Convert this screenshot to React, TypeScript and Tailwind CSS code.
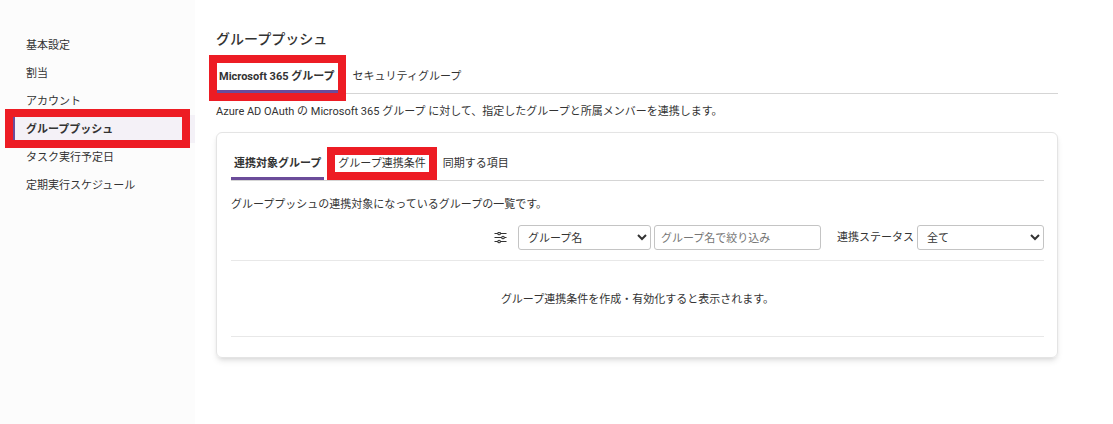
import React, { useState } from 'react'
import clsx from 'clsx'

const menuItems = [
    { name: '基本設定', href: '#basic' },
    { name: '割当', href: '#assign' },
    { name: 'アカウント', href: '#account' },
    { name: 'グループプッシュ', href: '#group-push' },
    { name: 'タスク実行予定日', href: '#task' },
    { name: '定期実行スケジュール', href: '#schedule' },
]

const groupTabs = ['Microsoft 365 グループ', 'セキュリティグループ']
const detailTabs = ['連携対象グループ', 'グループ連携条件', '同期する項目']

function Marker({ className }: { className: string }) {
    return <span aria-hidden="true" className={clsx('pointer-events-none absolute z-10 border-8 border-[#ed1c24]', className)} />
}

function SlidersIcon() {
    return (
        <svg viewBox="0 0 13 12" className="h-3 w-[13px]" fill="none" stroke="#333" strokeWidth="1.1" aria-hidden="true">
            <path d="M0.5 1.5h3.3M6.4 1.5H12.5M0.5 5.5h7.1M10.4 5.5H12.5M0.5 9.5h3.3M6.4 9.5H12.5" />
            <circle cx="5.1" cy="1.5" r="1.3" />
            <circle cx="9" cy="5.5" r="1.3" />
            <circle cx="5.1" cy="9.5" r="1.3" />
        </svg>
    )
}

function Sidebar() {
    return (
        <aside className="w-[195px] shrink-0 bg-[#fcfcfc] pt-[31px] pl-[13px]">
            <nav>
                {menuItems.map((item) => {
                    const isActive = item.name === 'グループプッシュ'
                    return (
                        <a
                            key={item.href}
                            href={item.href}
                            className={clsx(
                                'relative flex h-7 items-center border-l-2 pt-0.5 pl-[11px]',
                                isActive ? 'border-[#6b4c9a] bg-[#f4f1f7] font-bold' : 'border-transparent'
                            )}
                        >
                            {item.name}
                            {isActive && <Marker className="-top-1.5 -left-2.5 right-[5px] -bottom-[5px]" />}
                        </a>
                    )
                })}
            </nav>
        </aside>
    )
}

type TabsProps = {
    items: string[]
    marked: string
    markerClass: string
    className: string
}

function Tabs({ items, marked, markerClass, className }: TabsProps) {
    const [active, setActive] = useState(items[0])

    return (
        <div role="tablist" className={clsx('flex h-[34px] border-b border-[#d5d5d5]', className)}>
            {items.map((item) => (
                <button
                    key={item}
                    type="button"
                    role="tab"
                    aria-selected={item === active}
                    onClick={() => setActive(item)}
                    className={clsx(
                        'relative border-b-3 px-[3px] pt-1 whitespace-nowrap',
                        item === active ? 'border-[#6b4c9a] font-bold' : 'border-transparent'
                    )}
                >
                    {item}
                    {item === marked && <Marker className={markerClass} />}
                </button>
            ))}
        </div>
    )
}

export default function App() {
    return (
        <div className="flex min-h-screen bg-white font-['Roboto','Noto_Sans_CJK_JP',sans-serif] text-[11px] leading-4 text-[#333]">
            <Sidebar />

            <main className="min-w-0 flex-1 pt-[29px] pr-[55px] pl-[21px]">
                <h1 className="text-sm leading-5 font-medium">グループプッシュ</h1>

                <Tabs
                    items={groupTabs}
                    marked="Microsoft 365 グループ"
                    markerClass="-top-[5px] -right-2 -left-[7px] -bottom-[11px]"
                    className="mt-[11px] gap-3"
                />
                <p className="mt-2.5">
                    Azure AD OAuth の Microsoft 365 グループ に対して、指定したグループと所属メンバーを連携します。
                </p>

                <section className="mt-3 rounded-md border border-[#e4e4e4] pt-[14px] pr-[13px] pb-5 pl-3.5 shadow-md">
                    <Tabs
                        items={detailTabs}
                        marked="グループ連携条件"
                        markerClass="top-0 -right-2 -left-2 -bottom-[3px]"
                        className="gap-[11px]"
                    />
                    <p className="mt-4">グループプッシュの連携対象になっているグループの一覧です。</p>

                    <div className="mt-3 flex items-center justify-end gap-[3px]">
                        <button type="button" aria-label="絞り込み" className="mr-2">
                            <SlidersIcon />
                        </button>
                        <select aria-label="検索項目" className="h-[25px] w-[133px] rounded-[3px] border border-[#c4c4c4] bg-white px-[5px] pt-px">
                            <option>グループ名</option>
                        </select>
                        <input
                            type="text"
                            aria-label="グループ名"
                            placeholder="グループ名で絞り込み"
                            className="h-[25px] w-[167px] rounded-[3px] border border-[#c4c4c4] px-1.5 pt-px placeholder:text-[#757575]"
                        />
                        <label htmlFor="status" className="ml-[13px]">連携ステータス</label>
                        <select id="status" className="h-[25px] w-[127px] rounded-[3px] border border-[#c4c4c4] bg-white px-[5px] pt-px">
                            <option>全て</option>
                        </select>
                    </div>

                    <div className="mt-2.5 border-y border-[#e8e8e8] pt-[31px] pb-7 text-center">
                        グループ連携条件を作成・有効化すると表示されます。
                    </div>
                </section>
            </main>
        </div>
    )
}
